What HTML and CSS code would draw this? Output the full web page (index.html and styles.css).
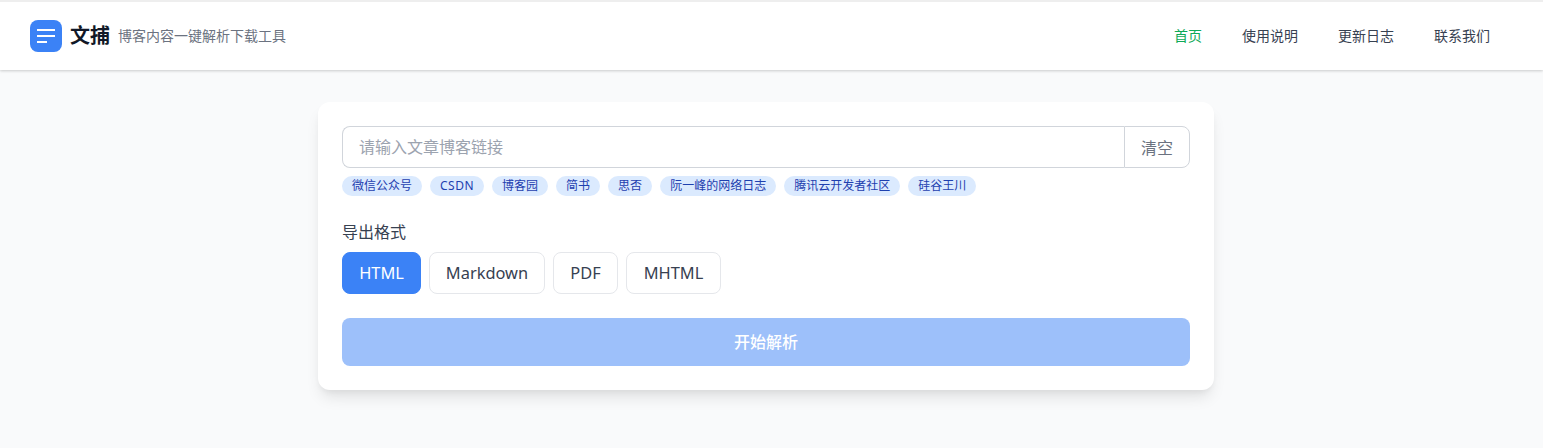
FILE: index.html
```html
<!DOCTYPE html>
<html lang="zh-CN">
<head>
<meta charset="utf-8">
<title>文捕</title>
<link rel="stylesheet" href="styles.css">
</head>
<body>
<header class="header">
  <div class="brand">
    <span class="logo">
      <svg width="32" height="32" viewBox="0 0 32 32" fill="none" stroke="#fff" stroke-width="2">
        <path d="M7 10H25"/><path d="M7 16H25"/><path d="M7 22H17"/>
      </svg>
    </span>
    <span class="brand-name">文捕</span>
    <span class="brand-sub">博客内容一键解析下载工具</span>
  </div>
  <nav class="nav">
    <a class="nav-link active">首页</a>
    <a class="nav-link">使用说明</a>
    <a class="nav-link">更新日志</a>
    <a class="nav-link">联系我们</a>
  </nav>
</header>
<main class="main">
  <section class="card">
    <div class="input-group">
      <input class="url-input" type="text" placeholder="请输入文章博客链接">
      <button class="clear-btn">清空</button>
    </div>
    <div class="chips">
      <span class="chip">微信公众号</span>
      <span class="chip chip-latin">CSDN</span>
      <span class="chip">博客园</span>
      <span class="chip">简书</span>
      <span class="chip">思否</span>
      <span class="chip">阮一峰的网络日志</span>
      <span class="chip">腾讯云开发者社区</span>
      <span class="chip">硅谷王川</span>
    </div>
    <div class="label">导出格式</div>
    <div class="formats">
      <button class="format format-html selected">HTML</button>
      <button class="format format-md">Markdown</button>
      <button class="format format-pdf">PDF</button>
      <button class="format format-mhtml">MHTML</button>
    </div>
    <button class="submit">开始解析</button>
  </section>
</main>
</body>
</html>
```
FILE: styles.css
```css
* { box-sizing: border-box; }
html, body { margin: 0; padding: 0; }
body {
  height: 448px;
  overflow: hidden;
  background: #f9fafb;
  color: #1f2937;
  font-family: "Noto Sans", "Noto Sans CJK SC", sans-serif;
  border-top: 2px solid #eeeeee;
}
.header {
  height: 68px;
  background: #fff;
  box-shadow: 0 1px 3px rgba(0,0,0,.14), 0 1px 2px rgba(0,0,0,.06);
  display: flex;
  align-items: center;
  justify-content: space-between;
  padding: 0 53px 0 30px;
}
.brand { display: flex; align-items: center; }
.logo {
  width: 32px; height: 32px;
  background: #3b82f6;
  border-radius: 8px;
  display: block;
  margin-right: 8px;
}
.logo svg { display: block; }
.brand-name { font-size: 20px; font-weight: 700; line-height: 28px; color: #111827; margin-right: 8px; }
.brand-sub { font-size: 14px; line-height: 20px; color: #6b7280; }
.nav { display: flex; gap: 40px; }
.nav-link { font-size: 14px; line-height: 20px; color: #374151; }
.nav-link.active { color: #0fa958; }
.main { display: flex; justify-content: center; padding: 32px 11px 0 0; }
.card {
  width: 896px;
  background: #fff;
  border-radius: 12px;
  padding: 24px;
  box-shadow: 0 10px 15px -3px rgba(0,0,0,.1), 0 4px 6px -2px rgba(0,0,0,.05);
}
.input-group { display: flex; height: 42px; }
.url-input {
  flex: 1;
  min-width: 0;
  border: 1px solid #d1d5db;
  border-right: 0;
  border-radius: 8px 0 0 8px;
  padding: 0 16px;
  font: inherit;
  font-size: 16px;
  outline: none;
  background: #fff;
}
.url-input::placeholder { color: #9ca3af; opacity: 1; }
.clear-btn {
  width: 66px;
  border: 1px solid #d1d5db;
  border-radius: 0 8px 8px 0;
  background: #fff;
  color: #6b7280;
  font: inherit;
  font-size: 16px;
  padding: 0;
}
.chips { display: flex; gap: 8px; margin-top: 8px; }
.chip {
  height: 20px;
  line-height: 20px;
  padding: 0 10px;
  border-radius: 10px;
  background: #dbeafe;
  color: #1e40af;
  font-size: 12px;
}
.chip-latin { letter-spacing: .5px; }
.label { font-size: 16px; line-height: 24px; color: #374151; margin-top: 24px; margin-bottom: 8px; }
.formats { display: flex; gap: 8px; }
.format {
  height: 42px;
  padding: 0 0 2px;
  border: 1px solid #e5e7eb;
  border-radius: 8px;
  background: #fff;
  color: #374151;
  font: inherit;
  font-size: 16.4px;
}
.format-html { width: 79px; }
.format-md { width: 116px; }
.format-pdf { width: 65px; }
.format-mhtml { width: 95px; }
.format.selected { background: #3b82f6; border-color: #3b82f6; color: #fff; }
.submit {
  display: block;
  width: 100%;
  height: 48px;
  margin-top: 24px;
  padding: 0 0 2px;
  border: 0;
  border-radius: 8px;
  background: #9dc0fa;
  color: #fff;
  font: inherit;
  font-size: 16px;
  font-weight: 500;
}
```
